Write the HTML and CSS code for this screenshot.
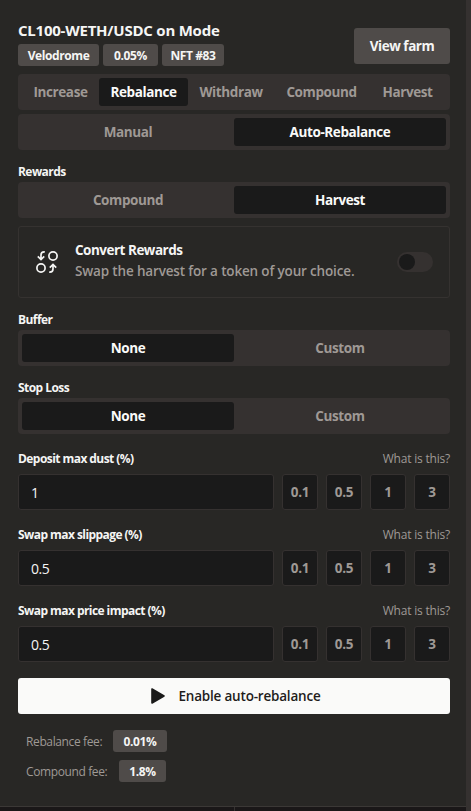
FILE: index.html
```html
<!DOCTYPE html>
<html lang="en">
<head>
<meta charset="utf-8">
<title>Rebalance</title>
<link rel="stylesheet" href="styles.css">
</head>
<body>
<main class="panel">
  <header class="header">
    <div class="heading">
      <h1 class="title">CL100-WETH/USDC on Mode</h1>
      <div class="tags"><span class="tag tag-protocol">Velodrome</span><span class="tag tag-rate">0.05%</span><span class="tag tag-nft">NFT #83</span></div>
    </div>
    <button class="view">View farm</button>
  </header>
  <nav class="tabs actions"><button class="tab">Increase</button><button class="tab active">Rebalance</button><button class="tab">Withdraw</button><button class="tab">Compound</button><button class="tab">Harvest</button></nav>
  <div class="tabs mode"><button class="tab">Manual</button><button class="tab active">Auto-Rebalance</button></div>

  <h2 class="label rewards-label">Rewards</h2>
  <div class="tabs"><button class="tab">Compound</button><button class="tab active">Harvest</button></div>
  <section class="card">
    <svg class="swap" viewBox="0 0 24 24" fill="none" stroke="#f5f5f4" stroke-width="1.7">
      <circle cx="18" cy="6" r="4.1"/>
      <circle cx="6" cy="18" r="4.1"/>
      <path d="M9.8 1.8H9.2Q6 1.8 6 5v4.3M2.8 6.4 6 9.6l3.2-3.2M14.2 22.2h.6q3.2 0 3.2-3.2v-4.3M14.8 17.6 18 14.4l3.2 3.2"/>
    </svg>
    <div class="card-text"><h3 class="card-title">Convert Rewards</h3><p class="card-desc">Swap the harvest for a token of your choice.</p></div>
    <span class="switch" role="switch" aria-checked="false"><span class="thumb"></span></span>
  </section>

  <h2 class="label buffer-label">Buffer</h2>
  <div class="tabs"><button class="tab active">None</button><button class="tab">Custom</button></div>
  <h2 class="label stop-label">Stop Loss</h2>
  <div class="tabs"><button class="tab active">None</button><button class="tab">Custom</button></div>

  <section class="field">
    <div class="field-head"><span class="label">Deposit max dust (%)</span><span class="help">What is this?</span></div>
    <div class="field-row"><input class="input" value="1"><button class="preset">0.1</button><button class="preset">0.5</button><button class="preset">1</button><button class="preset">3</button></div>
  </section>
  <section class="field">
    <div class="field-head"><span class="label">Swap max slippage (%)</span><span class="help">What is this?</span></div>
    <div class="field-row"><input class="input" value="0.5"><button class="preset">0.1</button><button class="preset">0.5</button><button class="preset">1</button><button class="preset">3</button></div>
  </section>
  <section class="field">
    <div class="field-head"><span class="label">Swap max price impact (%)</span><span class="help">What is this?</span></div>
    <div class="field-row"><input class="input" value="0.5"><button class="preset">0.1</button><button class="preset">0.5</button><button class="preset">1</button><button class="preset">3</button></div>
  </section>

  <button class="submit"><svg class="play" viewBox="0 0 14 16"><path d="M1 1v14l12-7z" fill="#1a1a1a" stroke="#1a1a1a" stroke-width="1.6" stroke-linejoin="round"/></svg><span>Enable auto-rebalance</span></button>
  <div class="fees">
    <div class="fee"><span class="fee-name rebalance-fee">Rebalance fee:</span><span class="tag fee-rebalance">0.01%</span></div>
    <div class="fee"><span class="fee-name compound-fee">Compound fee:</span><span class="tag fee-compound">1.8%</span></div>
  </div>
</main>
<aside class="rail"></aside>
<footer class="footer"><span class="footer-cell"></span></footer>
</body>
</html>
```
FILE: styles.css
```css
* { box-sizing: border-box; }
html, body { margin: 0; height: 811px; overflow: hidden; }
body {
  display: grid;
  grid-template: 806px 5px / 466px 5px;
  background: #282725;
  color: #f5f5f4;
  font-family: "Open Sans", "Noto Sans", sans-serif;
}
h1, h2, h3, p { margin: 0; }
button, input { font: inherit; border: 0; margin: 0; padding: 0; color: inherit; white-space: nowrap; }
.panel { display: flex; flex-direction: column; padding: 20px 16px 0 18px; }
.rail { background: #353130; grid-row: 1 / 3; grid-column: 2; }
.footer { background: #1a1718; border-top: 1px solid #3b3836; grid-row: 2; grid-column: 1; }
.footer-cell { display: block; width: 235px; height: 4px; border-right: 1px solid #353130; }

.header { display: flex; justify-content: space-between; height: 46px; }
.title { font-size: 15px; line-height: 20px; font-weight: 700; letter-spacing: -0.23px; height: 24px; white-space: nowrap; }
.tags { display: flex; gap: 4px; }
.tag { display: flex; align-items: center; justify-content: center; height: 22px; border-radius: 3px; background: #4f4b49; font-size: 12px; font-weight: 700; letter-spacing: -0.4px; white-space: nowrap; }
.tag-protocol { width: 81px; letter-spacing: -0.4px; }
.tag-rate { width: 55px; }
.tag-nft { width: 62px; }
.view { align-self: flex-start; margin-top: 8px; width: 96px; height: 36px; border-radius: 3px; background: #4f4b49; font-size: 13.5px; font-weight: 700; letter-spacing: -0.45px; }

.tabs { display: grid; grid-template-columns: 1fr 1fr; height: 36px; flex: none; padding: 4px; border-radius: 4px; background: #353130; }
.actions { grid-template-columns: 77px 89px 86px 95px 77px; margin-top: 8px; }
.mode { margin-top: 4px; }
.tab { background: none; border-radius: 3px; color: #9f9995; font-size: 13.5px; font-weight: 700; letter-spacing: -0.4px; }
.active { background: #1a1a1a; color: #fafaf9; }
.label { font-size: 12px; line-height: 16px; font-weight: 700; letter-spacing: -0.56px; white-space: nowrap; }
.rewards-label { margin: 14px 0 2px; }
.buffer-label { margin: 14px 0 2px; }
.stop-label { margin: 14px 0 2px; }

.card { display: flex; align-items: center; height: 72px; flex: none; margin-top: 8px; padding: 0 16px; border: 1px solid #353230; border-radius: 3px; }
.swap { width: 24px; height: 24px; flex: none; }
.card-text { margin-left: 16px; margin-top: -3px; flex: 1; white-space: nowrap; }
.card-title { font-size: 13.5px; line-height: 21px; font-weight: 700; letter-spacing: -0.5px; }
.card-desc { font-size: 13.5px; line-height: 21px; font-weight: 600; letter-spacing: -0.16px; color: #9f9995; }
.switch { display: flex; align-items: center; width: 36px; height: 20px; padding: 2px; border-radius: 10px; background: #353130; }
.thumb { width: 16px; height: 16px; border-radius: 50%; background: #1a1a1a; }

.field { margin-top: 16px; }
.stop-label + .tabs + .field { margin-top: 17px; }
.field-head { display: flex; justify-content: space-between; height: 23px; }
.field + .field { margin-top: 17px; }
.help { color: #9f9995; font-size: 12px; line-height: 16px; letter-spacing: -0.2px; }
.field-row { display: grid; grid-template-columns: 256px repeat(4, 36px); gap: 8px; height: 36px; }
.input, .preset { min-width: 0; background: #1a1a1a; border: 1px solid #353130; border-radius: 3px; font-size: 13.5px; }
.input { padding: 0 12px; font-size: 14px; letter-spacing: -0.5px; }
.preset { color: #9f9995; font-weight: 700; letter-spacing: -0.3px; }

.submit { display: flex; align-items: center; justify-content: center; gap: 13px; height: 36px; flex: none; margin-top: 16px; padding-left: 4px; border-radius: 3px; background: #fafaf9; color: #1f1d1c; font-size: 13.5px; font-weight: 600; letter-spacing: -0.2px; }
.play { width: 14px; height: 16px; }
.fees { display: grid; gap: 8px; margin: 16px 0 0 8px; }
.fee { display: flex; align-items: center; height: 22px; }
.fee-name { font-size: 12px; color: #9f9995; letter-spacing: -0.38px; white-space: nowrap; }
.rebalance-fee { width: 87px; }
.compound-fee { width: 93px; }
.fee-rebalance { width: 54px; }
.fee-compound { width: 47px; }
```
